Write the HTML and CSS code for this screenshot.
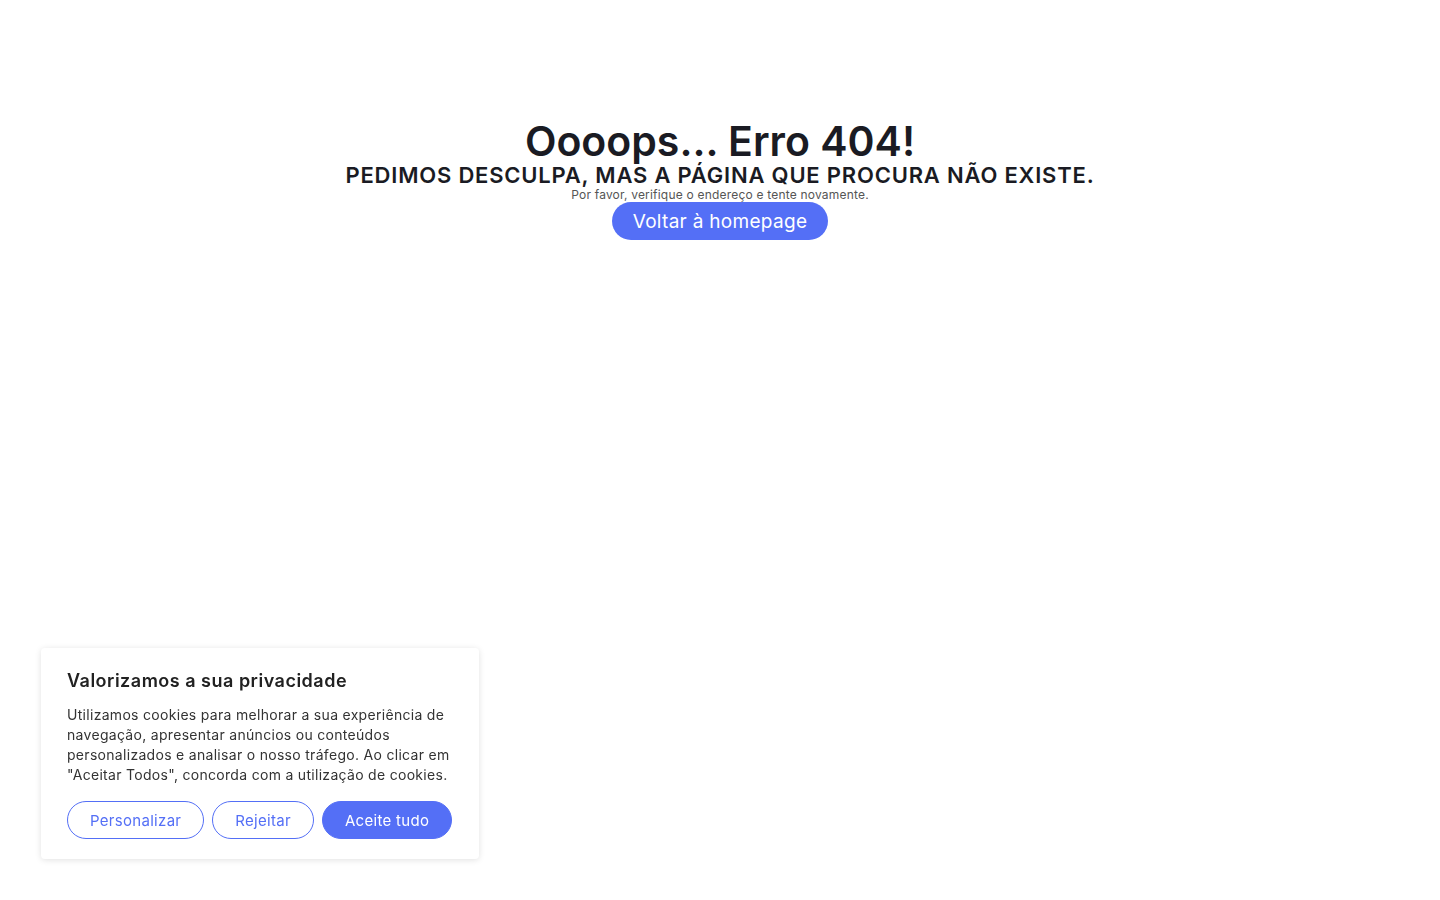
FILE: index.html
```html
<!DOCTYPE html>
<html lang="pt">
<head>
<meta charset="utf-8">
<title>Erro 404</title>
<link rel="stylesheet" href="styles.css">
</head>
<body>
<main class="error">
  <h1 class="error-title">Oooops... Erro 404!</h1>
  <h2 class="error-subtitle">PEDIMOS DESCULPA, MAS A PÁGINA QUE PROCURA NÃO EXISTE.</h2>
  <p class="error-text">Por favor, verifique o endereço e tente novamente.</p>
  <a class="btn-home" href="#">Voltar à homepage</a>
</main>
<div class="cookie">
  <h3 class="cookie-title">Valorizamos a sua privacidade</h3>
  <p class="cookie-text">Utilizamos cookies para melhorar a sua experiência de navegação, apresentar anúncios ou conteúdos personalizados e analisar o nosso tráfego. Ao clicar em "Aceitar Todos", concorda com a utilização de cookies.</p>
  <div class="cookie-actions">
    <button class="cbtn cbtn-outline">Personalizar</button>
    <button class="cbtn cbtn-outline">Rejeitar</button>
    <button class="cbtn cbtn-solid">Aceite tudo</button>
  </div>
</div>
</body>
</html>
```
FILE: styles.css
```css
html, body {
  margin: 0;
  padding: 0;
  background: #fff;
}
body {
  font-family: Inter, "DejaVu Sans", sans-serif;
  color: #1c1c24;
  min-height: 900px;
}
.error {
  display: flex;
  flex-direction: column;
  align-items: center;
  padding-top: 119px;
}
.error-title {
  margin: 0;
  font-size: 41px;
  line-height: 45px;
  font-weight: 600;
  color: #1a1b23;
}
.error-subtitle {
  margin: 0;
  font-size: 22px;
  line-height: 23px;
  font-weight: 600;
  letter-spacing: 0.8px;
  color: #1a1b23;
}
.error-text {
  margin: 0;
  font-size: 12px;
  line-height: 15px;
  letter-spacing: 0.2px;
  color: #555;
}
.btn-home {
  display: inline-flex;
  align-items: center;
  justify-content: center;
  height: 38px;
  width: 216px;
  border-radius: 19px;
  background: #546ff6;
  color: #fff;
  font-size: 19px;
  letter-spacing: 0.3px;
  text-decoration: none;
}
.cookie {
  position: fixed;
  left: 41px;
  top: 648px;
  width: 438px;
  box-sizing: border-box;
  padding: 22px 26px 20px;
  background: #fff;
  border-radius: 4px;
  box-shadow: 0 1px 6px rgba(0,0,0,0.12);
}
.cookie-title {
  margin: 0 0 13px;
  font-size: 18px;
  line-height: 22px;
  font-weight: 600;
  letter-spacing: 0.5px;
  color: #212121;
}
.cookie-text {
  margin: 0 0 16px;
  font-size: 14px;
  line-height: 20px;
  letter-spacing: 0.3px;
  color: #333;
}
.cookie-actions {
  display: flex;
  gap: 8px;
}
.cbtn {
  height: 38px;
  border-radius: 19px;
  font-family: inherit;
  font-size: 15px;
  letter-spacing: 0.3px;
  padding: 0 22px;
  border: 1px solid #546ff6;
  cursor: pointer;
}
.cbtn-outline {
  background: #fff;
  color: #546ff6;
}
.cbtn-solid {
  background: #546ff6;
  color: #fff;
}
```
